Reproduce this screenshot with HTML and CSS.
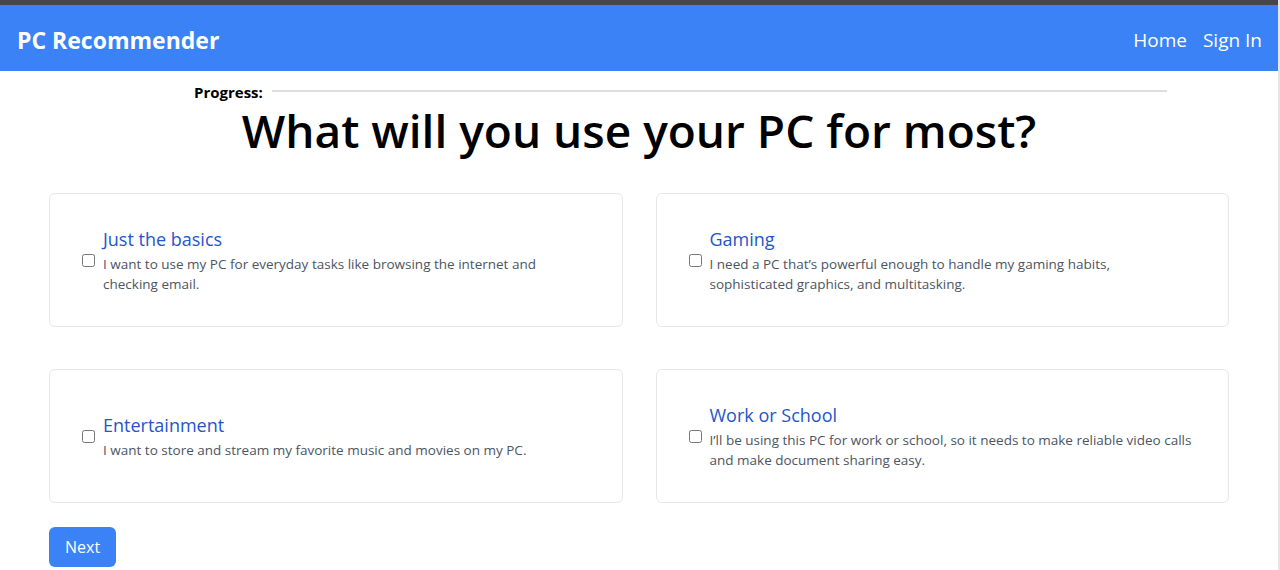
FILE: index.html
```html
<!DOCTYPE html>
<html lang="en">
<head>
<meta charset="utf-8">
<title>PC Recommender</title>
<link rel="stylesheet" href="styles.css">
</head>
<body>
<div class="topbar"></div>
<nav class="navbar">
  <a class="brand" href="#">PC Recommender</a>
  <div class="nav-links">
    <a href="#">Home</a>
    <a href="#">Sign In</a>
  </div>
</nav>
<main class="main">
  <div class="progress">
    <span class="progress-label">Progress:</span>
    <div class="progress-track"></div>
  </div>
  <h1 class="question">What will you use your PC for most?</h1>
  <div class="options">
    <label class="card">
      <input type="checkbox" class="check">
      <span class="card-text">
        <span class="card-title">Just the basics</span>
        <span class="card-desc">I want to use my PC for everyday tasks like browsing the internet and checking email.</span>
      </span>
    </label>
    <label class="card">
      <input type="checkbox" class="check">
      <span class="card-text">
        <span class="card-title">Gaming</span>
        <span class="card-desc">I need a PC that’s powerful enough to handle my gaming habits, sophisticated graphics, and multitasking.</span>
      </span>
    </label>
    <label class="card">
      <input type="checkbox" class="check">
      <span class="card-text">
        <span class="card-title">Entertainment</span>
        <span class="card-desc">I want to store and stream my favorite music and movies on my PC.</span>
      </span>
    </label>
    <label class="card">
      <input type="checkbox" class="check">
      <span class="card-text">
        <span class="card-title">Work or School</span>
        <span class="card-desc">I’ll be using this PC for work or school, so it needs to make reliable video calls and make document sharing easy.</span>
      </span>
    </label>
  </div>
  <button class="next-btn">Next</button>
</main>
</body>
</html>
```

FILE: styles.css
```css
* { box-sizing: border-box; }
html, body { margin: 0; padding: 0; }
body {
  font-family: "Open Sans", "Noto Sans", sans-serif;
  background: #fff;
  color: #000;
  overflow: hidden;
  border-right: 2px solid #e6e6e6;
  height: 570px;
}
.topbar { height: 5px; background: #474747; }
.navbar {
  height: 66px;
  background: #3b82f6;
  display: flex;
  align-items: center;
  justify-content: space-between;
  padding: 4px 16px 0 17px;
}
.brand {
  color: #fff;
  font-weight: 700;
  font-size: 23px;
  text-decoration: none;
}
.nav-links { display: flex; gap: 16px; }
.nav-links a {
  color: #fff;
  text-decoration: none;
  font-size: 19px;
}
.main { padding: 0 49px; }
.progress {
  display: flex;
  align-items: center;
  gap: 9px;
  margin: 12px 62px 0 145px;
  height: 18px;
}
.progress-label { font-weight: 700; font-size: 15px; }
.progress-track { flex: 1; height: 2px; background: #dedede; margin-top: -2px; }
.question {
  text-align: center;
  font-size: 46px;
  font-weight: 600;
  margin: -3px 0 0;
  line-height: 64px;
}
.options {
  display: grid;
  grid-template-columns: 1fr 1fr;
  column-gap: 33px;
  row-gap: 42px;
  margin-top: 31px;
}
.card {
  display: flex;
  align-items: center;
  height: 134px;
  border: 1px solid #e7e7e7;
  border-radius: 6px;
  padding: 0 28px 0 32px;
}
.check {
  width: 13px;
  height: 13px;
  margin: 0 8px 0 0;
  flex: none;
}
.card-text { display: flex; flex-direction: column; max-width: 485px; }
.card-title {
  color: #2456c9;
  font-size: 18px;
  font-weight: 500;
  line-height: 24px;
  margin-bottom: 3px;
}
.card-desc {
  color: #4b5563;
  font-size: 13.5px;
  line-height: 20px;
}
.next-btn {
  margin-top: 24px;
  background: #3b82f6;
  color: #fff;
  border: none;
  border-radius: 6px;
  font-family: inherit;
  font-size: 16px;
  height: 40px;
  padding: 0 16px;
}
```
